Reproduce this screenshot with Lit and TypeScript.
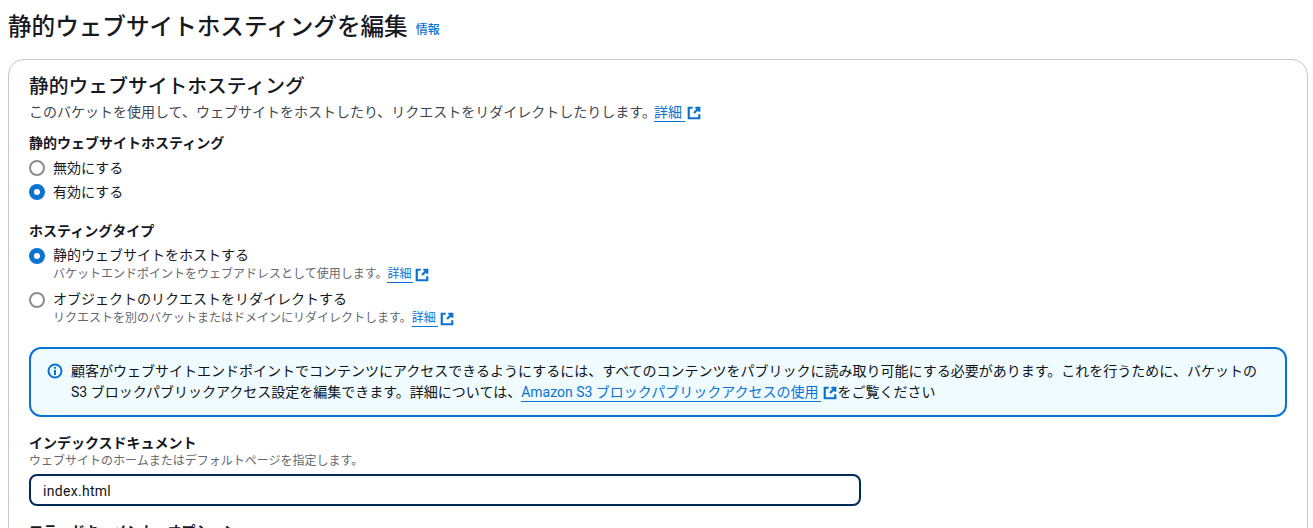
import { LitElement, html, css } from 'lit';
import { customElement } from 'lit/decorators.js';

@customElement('app-root')
export class AppRoot extends LitElement {
  static styles = css`
    :host {
      display: block;
      height: 528px;
      overflow: hidden;
      background: #fff;
      color: #16191f;
      font-family: Roboto, "Noto Sans CJK JP", sans-serif;
      font-size: 14px;
      line-height: 20px;
    }
    a {
      color: #0972d3;
    }
    .page-head {
      display: flex;
      align-items: center;
      gap: 8px;
      height: 59px;
      padding: 0 0 6px 8px;
      box-sizing: border-box;
    }
    h1 {
      margin: 0;
      font-size: 23.6px;
      line-height: 30px;
      font-weight: 500;
      color: #16191f;
    }
    .info {
      font-size: 12px;
      font-weight: 500;
      margin-top: 6px;
    }
    .card {
      margin: 0 5px 0 8px;
      padding: 15px 20px 0;
      border: 1px solid #c6c6cd;
      border-radius: 16px;
      height: 500px;
    }
    h2 {
      margin: 0;
      font-size: 19.8px;
      line-height: 24px;
      font-weight: 500;
    }
    .desc {
      color: #414750;
      margin-top: 3px;
      height: 20px;
    }
    .desc .link {
      margin-left: -2px;
    }
    .link {
      display: inline-flex;
      align-items: center;
      gap: 2px;
      text-decoration: none;
    }
    .link span {
      border-bottom: 1px solid #0972d3;
      line-height: 17px;
      padding-right: 3px;
    }
    .ext {
      width: 14px;
      height: 14px;
      flex: none;
    }
    .label {
      font-weight: 700;
    }
    .group {
      margin-top: 11px;
    }
    .group.second {
      margin-top: 19px;
    }
    .options {
      display: flex;
      flex-direction: column;
      gap: 4px;
      margin-top: 5px;
    }
    .second .options {
      gap: 8px;
    }
    .option {
      display: flex;
      gap: 8px;
    }
    .option-title {
      margin: -1px 0 1px;
    }
    .radio {
      box-sizing: border-box;
      flex: none;
      width: 16px;
      height: 16px;
      margin-top: 2px;
      border-radius: 50%;
      border: 2px solid #8c8c94;
      background: #fff;
    }
    .radio.on {
      border: 5px solid #0972d3;
    }
    .hint {
      color: #656871;
      font-size: 12px;
      line-height: 16px;
      height: 16px;
    }
    .hint .link span {
      line-height: 15px;
      padding-right: 2px;
    }
    .alert {
      box-sizing: border-box;
      display: flex;
      gap: 8px;
      height: 70px;
      margin-top: 21px;
      padding: 12px 16px;
      border: 2px solid #0972d3;
      border-radius: 12px;
      background: #f0fbff;
      line-height: 21px;
      color: #0f141a;
    }
    .alert svg.i {
      width: 16px;
      height: 16px;
      flex: none;
      margin-top: 2px;
    }
    .field {
      margin-top: 16px;
    }
    .input {
      box-sizing: border-box;
      width: 832px;
      height: 32px;
      margin-top: 5px;
      padding: 0 12px;
      border: 2px solid #002a5c;
      border-radius: 8px;
      line-height: 30px;
      letter-spacing: 0.3px;
      color: #0f141a;
    }
    .field.last {
      margin-top: 15px;
    }
  `;

  // 外部リンクのアイコン
  private ext() {
    return html`<svg class="ext" viewBox="0 0 16 16" fill="none" stroke="#0972d3" stroke-width="2.5">
      <path d="M6.5 2H2v12h12V9.5" />
      <path d="M9.5 2H14v4.5M14 2 8 8" />
    </svg>`;
  }

  private link(text: string) {
    return html`<a class="link"><span>${text}</span>${this.ext()}</a>`;
  }

  render() {
    return html`
      <div class="page-head">
        <h1>静的ウェブサイトホスティングを編集</h1>
        <a class="info">情報</a>
      </div>
      <div class="card">
        <h2>静的ウェブサイトホスティング</h2>
        <div class="desc">
          このバケットを使用して、ウェブサイトをホストしたり、リクエストをリダイレクトしたりします。${this.link('詳細')}
        </div>
        <div class="group">
          <div class="label">静的ウェブサイトホスティング</div>
          <div class="options">
            <div class="option"><div class="radio"></div><div>無効にする</div></div>
            <div class="option"><div class="radio on"></div><div>有効にする</div></div>
          </div>
        </div>
        <div class="group second">
          <div class="label">ホスティングタイプ</div>
          <div class="options">
            <div class="option">
              <div class="radio on"></div>
              <div>
                <div class="option-title">静的ウェブサイトをホストする</div>
                <div class="hint">バケットエンドポイントをウェブアドレスとして使用します。${this.link('詳細')}</div>
              </div>
            </div>
            <div class="option">
              <div class="radio"></div>
              <div>
                <div class="option-title">オブジェクトのリクエストをリダイレクトする</div>
                <div class="hint">リクエストを別のバケットまたはドメインにリダイレクトします。${this.link('詳細')}</div>
              </div>
            </div>
          </div>
        </div>
        <div class="alert">
          <svg class="i" viewBox="0 0 16 16" fill="none" stroke="#0972d3" stroke-width="2">
            <circle cx="8" cy="8" r="6.5" />
            <path d="M8 7v5M8 4v1.8" />
          </svg>
          <div>
            顧客がウェブサイトエンドポイントでコンテンツにアクセスできるようにするには、すべてのコンテンツをパブリックに読み取り可能にする必要があります。これを行うために、バケットの<br />S3
            ブロックパブリックアクセス設定を編集できます。詳細については、${this.link('Amazon S3 ブロックパブリックアクセスの使用')}をご覧ください
          </div>
        </div>
        <div class="field">
          <div class="label">インデックスドキュメント</div>
          <div class="hint">ウェブサイトのホームまたはデフォルトページを指定します。</div>
          <div class="input">index.html</div>
        </div>
        <div class="field last">
          <div class="label">エラードキュメント - オプション</div>
        </div>
      </div>
    `;
  }
}
